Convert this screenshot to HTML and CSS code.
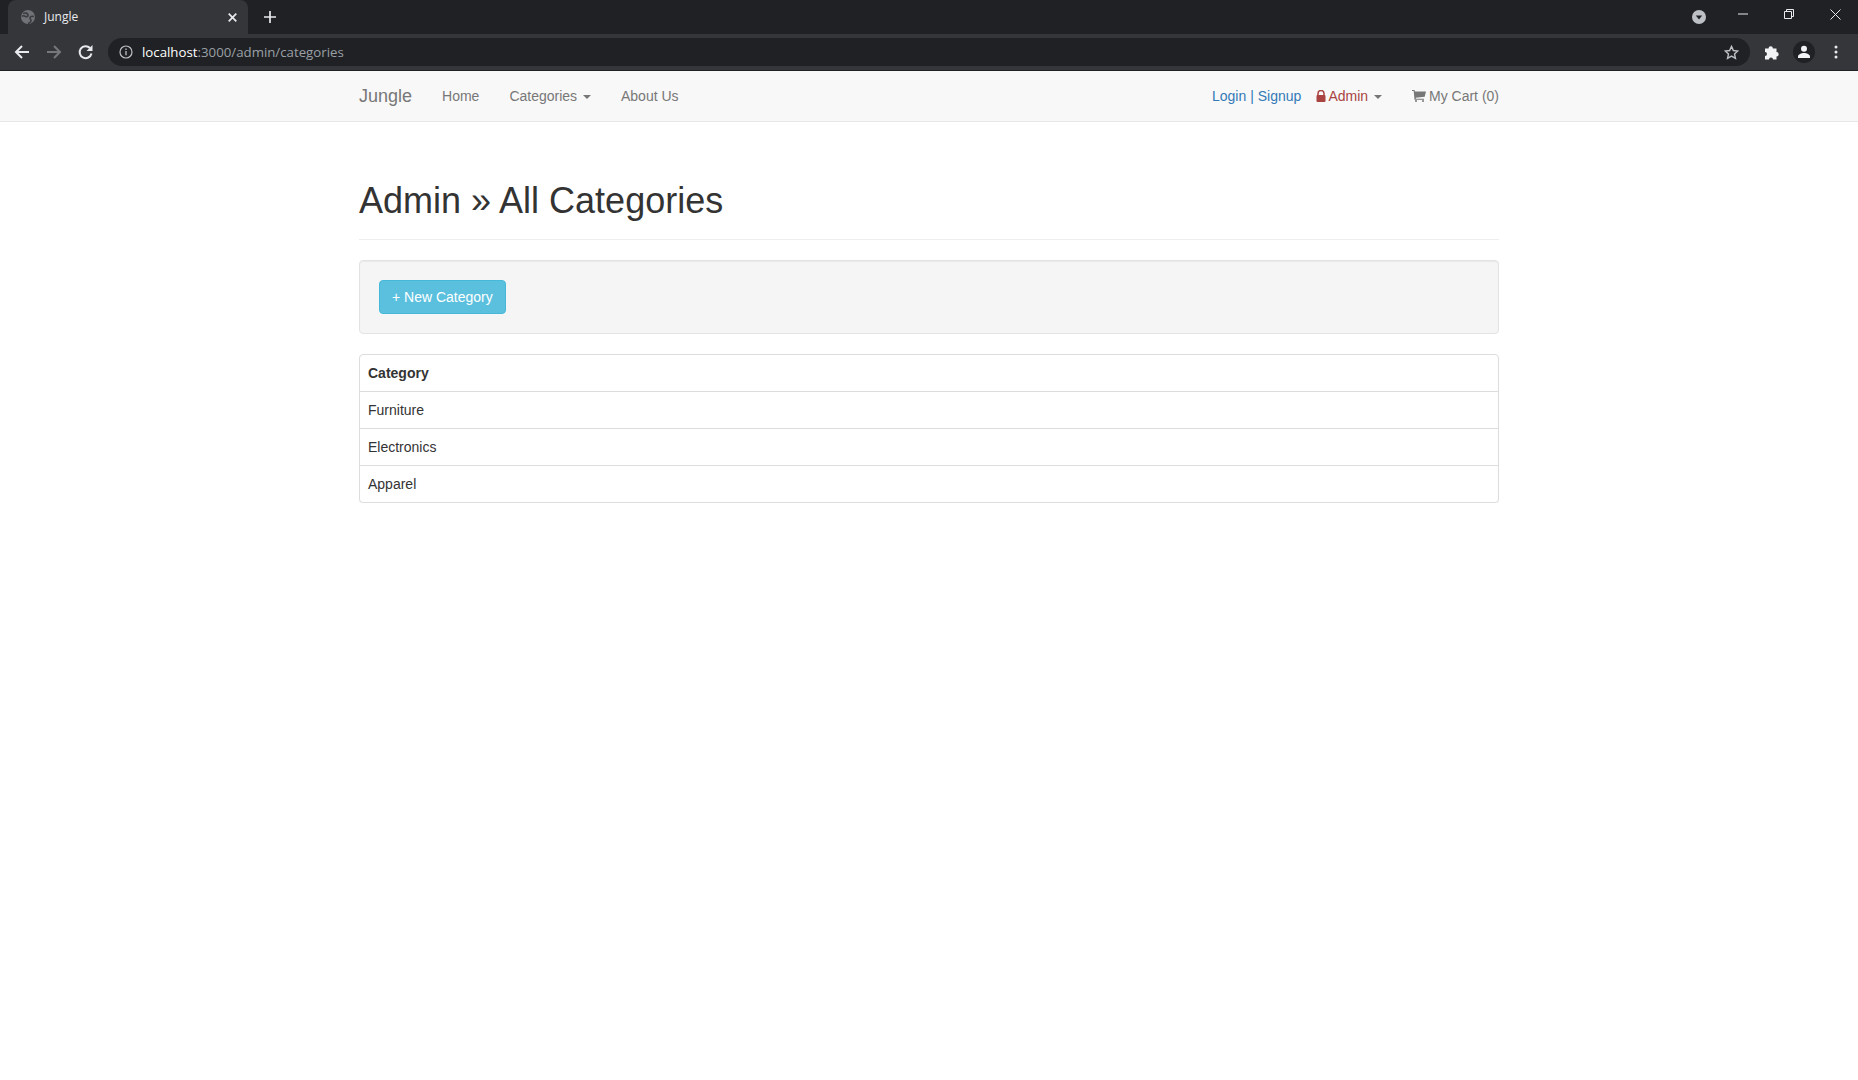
FILE: index.html
```html
<!DOCTYPE html>
<html lang="en">
<head>
    <meta charset="UTF-8" />
    <title>Jungle</title>
    <link rel="stylesheet" href="styles.css">
</head>
<body>
    <!-- browser window -->
    <div class="tabstrip">
        <div class="tab">
            <svg class="tab-globe" width="14" height="14" viewBox="0 0 14 14"><circle cx="7" cy="7" r="7" fill="#6f7276"/><path d="M2 3.500C4.500 2.500 6.500 3 7 5c.4 1.800-1.800 2-2.500 1.500S2 5.500 1 6.500M13 6.500C11 6 9 6.500 9 8s1.500 1.500 1 3-1.500 2-3 2.500" stroke="#3b3c40" stroke-width="1.600" fill="none"/></svg>
            <span class="tab-title">Jungle</span>
            <svg class="tab-close" width="9" height="9" viewBox="0 0 9 9"><path d="M.7.700l7.600 7.600M8.300.700L.7 8.300" stroke="#e8eaed" stroke-width="1.700"/></svg>
        </div>
        <svg class="tab-new" width="12" height="12" viewBox="0 0 12 12"><path d="M6 0v12M0 6h12" stroke="#e8eaed" stroke-width="1.700"/></svg>
        <div class="spacer"></div>
        <svg class="tab-search" width="14" height="14" viewBox="0 0 14 14"><circle cx="7" cy="7" r="7" fill="#bdc1c6"/><path d="M3.800 5.500h6.400L7 9.500z" fill="#202124"/></svg>
        <div class="win-buttons">
            <svg width="10" height="10" viewBox="0 0 10 10"><path d="M0 5h10" stroke="#e8eaed"/></svg>
            <svg width="10" height="10" viewBox="0 0 10 10"><path d="M.5 2.500h7v7h-7zM2.500 2.500v-2h7v7h-2" stroke="#e8eaed" fill="none"/></svg>
            <svg width="11" height="11" viewBox="0 0 11 11"><path d="M.5.500l10 10M10.500.500l-10 10" stroke="#e8eaed"/></svg>
        </div>
    </div>
    <div class="toolbar">
        <svg class="tool" width="16" height="16" viewBox="0 0 16 16"><path d="M15 8H2M8 2L2 8l6 6" stroke="#e8eaed" stroke-width="2" fill="none"/></svg>
        <svg class="tool" width="16" height="16" viewBox="0 0 16 16"><path d="M1 8h13M8 2l6 6-6 6" stroke="#75777b" stroke-width="2" fill="none"/></svg>
        <svg class="tool" width="16" height="16" viewBox="0 0 16 16"><path d="M13.500 9.500A6 6 0 1 1 12 4" stroke="#e8eaed" stroke-width="2" fill="none"/><path d="M14.500 1v6h-6z" fill="#e8eaed"/></svg>
        <div class="omnibox">
            <svg width="14" height="14" viewBox="0 0 14 14"><circle cx="7" cy="7" r="6" stroke="#bdc1c6" stroke-width="1.200" fill="none"/><path d="M7 6v4.200M7 3.600v1.300" stroke="#bdc1c6" stroke-width="1.300"/></svg>
            <span class="url"><b>localhost</b>:3000/admin/categories</span>
            <div class="spacer"></div>
            <svg width="15" height="15" viewBox="0 0 16 16"><path d="M8 1.500l2 4.400 4.700.5-3.500 3.200 1 4.700L8 11.900l-4.200 2.400 1-4.700L1.300 6.400 6 5.900z" stroke="#bdc1c6" stroke-width="1.500" fill="none"/></svg>
        </div>
        <svg class="ext" width="16" height="16" viewBox="0 0 16 16"><path d="M1 4.500h3.500a2.200 2.200 0 1 1 4.400 0h3.600V8a2.200 2.200 0 1 1 0 4.400v3.100H9a2 2 0 0 0-4 0H1V12a2 2 0 0 0 0-4z" fill="#f1f3f4"/></svg>
        <div class="avatar">
            <svg width="14" height="14" viewBox="0 0 14 14"><circle cx="7" cy="3.800" r="3" fill="#f1f3f4"/><path d="M1 13v-1.500C1 9.300 4.500 8 7 8s6 1.300 6 3.500V13z" fill="#f1f3f4"/></svg>
        </div>
        <svg class="dots" width="4" height="14" viewBox="0 0 4 14"><circle cx="2" cy="2" r="1.500" fill="#e8eaed"/><circle cx="2" cy="7" r="1.500" fill="#e8eaed"/><circle cx="2" cy="12" r="1.500" fill="#e8eaed"/></svg>
    </div>

    <!-- page -->
    <nav class="navbar">
        <div class="container nav-inner">
            <a class="brand" href="#">Jungle</a>
            <a class="nav-link" href="#">Home</a>
            <a class="nav-link" href="#">Categories <span class="caret"></span></a>
            <a class="nav-link" href="#">About Us</a>
            <div class="spacer"></div>
            <span class="auth"><a href="#">Login</a> | <a href="#">Signup</a></span>
            <a class="nav-admin" href="#"><svg class="lock" width="10" height="12" viewBox="0 0 10 12"><path d="M2 5.500V3.500a3 3 0 0 1 6 0v2" stroke="#a94442" stroke-width="1.500" fill="none"/><rect x="0.500" y="5" width="9" height="7" rx="1" fill="#a94442"/></svg> Admin <span class="caret"></span></a>
            <a class="nav-cart" href="#">
                <svg width="14" height="12" viewBox="0 0 14 12"><path d="M0 0h2.500l.5 1.500h11l-1.300 5.300-9 1 .3 1H12v1H2.500L1.700 1H0z" fill="#777"/><circle cx="4" cy="11" r="1" fill="#777"/><circle cx="11" cy="11" r="1" fill="#777"/></svg>
                My Cart (0)
            </a>
        </div>
    </nav>

    <main class="container">
        <header class="page-header">
            <h1>Admin » All Categories</h1>
        </header>
        <div class="well">
            <a class="btn-info" href="#">+ New Category</a>
        </div>
        <div class="panel">
            <table class="table">
                <thead>
                    <tr><th>Category</th></tr>
                </thead>
                <tbody>
                    <tr><td>Furniture</td></tr>
                    <tr><td>Electronics</td></tr>
                    <tr><td>Apparel</td></tr>
                </tbody>
            </table>
        </div>
    </main>
</body>
</html>
```

FILE: styles.css
```css
* {
    box-sizing: border-box;
}
body {
    margin: 0;
    background: #fff;
    color: #333;
    font-family: "Liberation Sans", Arial, sans-serif;
    font-size: 14px;
    line-height: 20px;
}
a {
    text-decoration: none;
}
.spacer {
    flex: 1;
}

/* browser window */
.tabstrip {
    display: flex;
    align-items: center;
    height: 34px;
    background: #202124;
    color: #e8eaed;
    font-family: "Open Sans", "Noto Sans", sans-serif;
}
.tab {
    display: flex;
    align-items: center;
    align-self: flex-end;
    width: 240px;
    height: 34px;
    margin-left: 8px;
    padding: 0 11px 0 13px;
    background: #35363a;
    border-radius: 8px 8px 0 0;
}
.tab-title {
    flex: 1;
    margin-left: 9px;
    font-size: 12px;
}
.tab-new {
    margin-left: 16px;
}
.tab-search {
    margin-right: 32px;
}
.win-buttons {
    display: flex;
    align-items: center;
    gap: 36px;
    padding-right: 17px;
    margin-top: -6px;
}
.toolbar {
    display: flex;
    align-items: center;
    height: 37px;
    padding: 0 0 0 14px;
    background: #35363a;
    border-bottom: 1px solid #202124;
}
.tool {
    margin-right: 16px;
}
.omnibox {
    display: flex;
    align-items: center;
    width: 1642px;
    height: 28px;
    margin-left: -2px;
    padding: 0 11px 0 11px;
    background: #202124;
    border-radius: 14px;
}
.url {
    margin-left: 9px;
    color: #9aa0a6;
    font-family: "Open Sans", "Noto Sans", sans-serif;
    font-size: 13.250px;
}
.url b {
    color: #fff;
    font-weight: 400;
}
.ext {
    margin-left: 14px;
}
.avatar {
    display: flex;
    align-items: center;
    justify-content: center;
    width: 22px;
    height: 22px;
    margin-left: 13px;
    background: #202124;
    border-radius: 50%;
}
.dots {
    margin-left: 19px;
}

/* navbar */
.container {
    width: 1170px;
    margin: 0 auto;
    padding: 0 15px;
}
.navbar {
    height: 51px;
    background: #f8f8f8;
    border-bottom: 1px solid #e7e7e7;
}
.nav-inner {
    display: flex;
    align-items: center;
    height: 50px;
    color: #777;
}
.nav-inner a {
    color: #777;
}
.brand {
    margin-right: 15px;
    font-size: 18px;
}
.nav-link {
    padding: 0 15px;
}
.caret {
    display: inline-block;
    width: 0;
    height: 0;
    margin-left: 2px;
    vertical-align: middle;
    color: #777;
    border-top: 4px solid;
    border-right: 4px solid transparent;
    border-left: 4px solid transparent;
}
.auth {
    color: #337ab7;
}
.nav-inner .auth a {
    color: #337ab7;
}
.nav-inner .nav-admin {
    margin-left: 15px;
    color: #a94442;
}
.lock {
    margin-right: -1px;
    vertical-align: -1px;
}
.nav-cart {
    display: flex;
    align-items: center;
    gap: 3px;
    margin-left: 30px;
}

/* contents */
.page-header {
    margin: 59px 0 20px;
    padding-bottom: 8px;
    border-bottom: 1px solid #eee;
}
h1 {
    margin: 20px 0 10px;
    font-size: 36px;
    font-weight: 500;
    line-height: 40px;
}
.well {
    min-height: 20px;
    margin-bottom: 20px;
    padding: 19px;
    background: #f5f5f5;
    border: 1px solid #e3e3e3;
    border-radius: 4px;
    box-shadow: inset 0 1px 1px rgba(0, 0, 0, 0.05);
}
.btn-info {
    display: inline-block;
    padding: 6px 12px;
    color: #fff;
    background: #5bc0de;
    border: 1px solid #46b8da;
    border-radius: 4px;
}
.panel {
    overflow: hidden;
    background: #fff;
    border: 1px solid #ddd;
    border-radius: 4px;
    box-shadow: 0 1px 1px rgba(0, 0, 0, 0.05);
}
.table {
    width: 100%;
    border-collapse: collapse;
}
.table th,
.table td {
    padding: 8px;
    text-align: left;
    line-height: 20px;
}
.table tbody tr td {
    border-top: 1px solid #ddd;
}
```
